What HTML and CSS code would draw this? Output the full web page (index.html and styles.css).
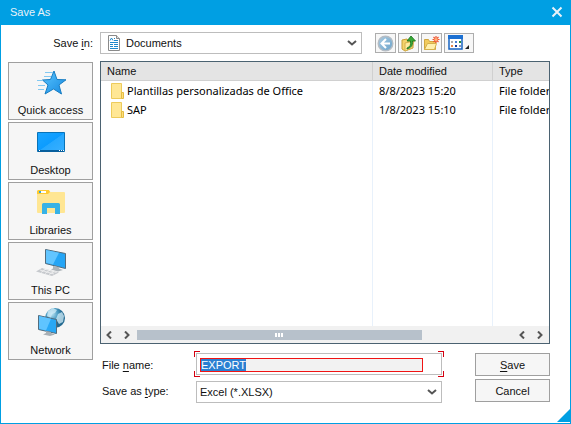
FILE: index.html
```html
<!DOCTYPE html>
<html lang="en">
<head>
<meta charset="utf-8">
<title>Save As</title>
<link rel="stylesheet" href="styles.css">
</head>
<body>
<form class="dialog">
  <header class="titlebar">
    <h1>Save As</h1>
    <button type="button" class="close" aria-label="Close">
      <svg width="12" height="12" viewBox="0 0 12 12"><path d="M1.5 1.5l9 9M10.5 1.5l-9 9" stroke="#e9f2f8" stroke-width="2"/></svg>
    </button>
  </header>

  <div class="content">
    <label class="look-label" for="look-in">Save <u>i</u>n:</label>
    <div class="look-row">
      <div class="combo combo-icon">
        <svg class="doc" width="12" height="16" viewBox="0 0 12 16">
          <path d="M.5.5h8l3 3v12H.5z" fill="#fff" stroke="#8a8a8a"/><path d="M8.500 .5v3h3" fill="#ddd" stroke="#8a8a8a"/>
          <path d="M2 5.500l1.500-2.500L5 5.500M6 3.500h1M6 5.500h4M2 7.500h8M2 9.500h3M6 9.500h4M2 11.500h3M6 11.500h4M2 13.500h8" fill="none" stroke="#1e88cb"/>
        </svg>
        <select id="look-in"><option>Documents</option></select>
        <svg class="chevron" width="10" height="6" viewBox="0 0 10 6"><path d="M1 1l4 3.500L9 1" fill="none" stroke="#555" stroke-width="2"/></svg>
      </div>
      <div class="tools">
        <button type="button" class="tool" aria-label="Back">
          <svg width="17" height="17" viewBox="0 0 17 17"><defs><linearGradient id="bk" x2="1" y2="1"><stop stop-color="#a9cbe2"/><stop offset="1" stop-color="#6ba3ca"/></linearGradient></defs><circle cx="8.500" cy="8.500" r="7.300" fill="url(#bk)" stroke="#b4bcc4" stroke-width="1.400"/><path d="M9 4L4.500 8.500 9 13M5 8.500h8" fill="none" stroke="#fff" stroke-width="2"/></svg>
        </button>
        <button type="button" class="tool" aria-label="Up one level">
          <svg width="17" height="17" viewBox="0 0 17 17"><path d="M2 5l5-1 1 2 5-1v8l-8 3-3-2z" fill="#f4d36c" stroke="#c79f35"/><path d="M5 8l9-2-2 7-7 3z" fill="#ffeb9f" stroke="#d5b04c"/><path d="M7 13c3-1 4-3 3.500-7H7L11 1l4.500 5h-3c.5 5-2 7-5.500 8z" fill="#39aa38" stroke="#16701b" stroke-width=".8"/></svg>
        </button>
        <button type="button" class="tool" aria-label="Create new folder">
          <svg width="17" height="17" viewBox="0 0 17 17"><path d="M1.500 4.500h4l1 2h6v8h-11z" fill="#f2cb5d" stroke="#cfa640"/><path d="M1.500 14.500l3-6h9l-2 6z" fill="#fff0ad" stroke="#d5b04c"/><path d="M13 1v7M9.500 4.500h7M10.500 2l5 5M15.500 2l-5 5" stroke="#ef5430" stroke-width="1.200"/><circle cx="13" cy="4.500" r="1.600" fill="#ffb27a"/></svg>
        </button>
        <button type="button" class="tool tool-wide" aria-label="View menu">
          <svg width="22" height="16" viewBox="0 0 22 16"><path d="M1 1h13v13H1z" fill="#fff" stroke="#1764c2" stroke-width="1.500"/><path d="M0 0h15v4H0z" fill="#1c70d2"/><path d="M3 6h2v2H3z" fill="#aaa"/><path d="M7 6h2v2H7z" fill="#4b80d3"/><path d="M11 6h2v2h-2z" fill="#208a3c"/><path d="M3 10h2v2H3z" fill="#e88848"/><path d="M7 10h2v2H7z" fill="#153d9a"/><path d="M11 10h2v2h-2z" fill="#8291b8"/><path d="M21 10v4h-4z" fill="#222"/></svg>
        </button>
      </div>
    </div>

    <nav class="places" aria-label="Places">
      <button type="button" class="place">
        <svg width="32" height="32" viewBox="0 0 32 32"><defs><linearGradient id="st" x2="1" y2="1"><stop stop-color="#5cc6ff"/><stop offset="1" stop-color="#1488e0"/></linearGradient></defs><path d="M19 5l3 8.500 9 .3-7 5.200 2.500 9-8-5-8.500 5 3-9-5.500-5 8-.5z" fill="url(#st)" stroke="#187dc2"/><path d="M10 6.500h8M9 10.500h7M2 14.500h6M3 19.500h7M3 23.500h6" stroke="#82c8f1"/></svg>
        <span>Quick access</span>
      </button>
      <button type="button" class="place">
        <svg width="32" height="32" viewBox="0 0 32 32"><defs><linearGradient id="dk" x2="1" y2="1"><stop stop-color="#1aa5ff"/><stop offset=".5" stop-color="#0c9cff"/><stop offset=".52" stop-color="#26a8ff"/><stop offset="1" stop-color="#39b0ff"/></linearGradient></defs><path d="M2.500 6.500h27v19h-27z" fill="url(#dk)" stroke="#0873b8"/><path d="M3 24h26v2H3z" fill="#075f9d"/><path d="M4 24.500h1M24 24.500h1M26 24.500h1M28 24.500h1" stroke="#fff"/></svg>
        <span>Desktop</span>
      </button>
      <button type="button" class="place">
        <svg width="32" height="32" viewBox="0 0 32 32"><path d="M2 5h12l1.500 1H29q1 0 1 1v19q0 1-1 1H3q-1 0-1-1z" fill="#ffe693"/><path d="M3 4h11l1 2-2 2H2V5z" fill="#ffca32"/><path d="M4 5h7v2H4z" fill="#fff"/><path d="M4 5h2v2H4z" fill="#36a8d6"/><path d="M7 28V18.500Q7 17 8.500 17h15q1.500 0 1.500 1.500V28h-5v-6h-8v6z" fill="#37b2e6"/></svg>
        <span>Libraries</span>
      </button>
      <button type="button" class="place">
        <svg width="32" height="32" viewBox="0 0 32 32"><path d="M10.500 3.500l20 4v15l-20-5z" fill="#25a5f5" stroke="#526c7d"/><path d="M11 4l13 2.800-6 11.700-7-1.800z" fill="#62c5ff"/><path d="M18 20v2.500l-2 1 7 2 5-1.500-4-1.500V21z" fill="#aeb5ba"/><path d="M7 22l17 4.500L17 30 1 25.500z" fill="#c6c9cd"/><path d="M5 24l14 4M8.500 22.800l13 3.700M11 23l-5 3.500M15 24l-5 3.500M19 25.500l-5 3" stroke="#f4f4f4" stroke-width=".8"/></svg>
        <span>This PC</span>
      </button>
      <button type="button" class="place">
        <svg width="32" height="32" viewBox="0 0 32 32"><defs><radialGradient id="gl" cx=".35" cy=".3"><stop stop-color="#b9e3f3"/><stop offset=".6" stop-color="#4a9bc2"/><stop offset="1" stop-color="#246a91"/></radialGradient></defs><circle cx="20" cy="12" r="10" fill="url(#gl)"/><path d="M13 5l5-3 4 2-2 3-3 1-1 4-4-2zM23 8l4-2 2 4-1 6-4 2-3-5zM18 15l4 2-2 4-3-2z" fill="#d3eef8" opacity=".75"/><path d="M3.500 9.500l18 4v14l-18-4z" fill="#28a8f6" stroke="#526c7d"/><path d="M4 10l12 2.800-5 11.700-7-1.800z" fill="#5fc4ff"/><path d="M11 25v2l-3 1.500 7 1.500 5-1.500-4-1.500v-1z" fill="#a8afb4"/></svg>
        <span>Network</span>
      </button>
    </nav>

    <section class="list">
      <table>
        <colgroup><col><col class="col-date"><col class="col-type"></colgroup>
        <thead><tr><th>Name</th><th>Date modified</th><th>Type</th></tr></thead>
        <tbody>
          <tr><td><div class="entry"><svg width="13" height="16" viewBox="0 0 13 16"><path d="M.5.500h10v15H.5z" fill="#ffe795" stroke="#edcb5b"/><path d="M10.500 9.500h2v6h-2z" fill="#ffe07a" stroke="#e4bd45"/></svg>Plantillas personalizadas de Office</div></td><td>8/8/2023 15:20</td><td>File folder</td></tr>
          <tr><td><div class="entry"><svg width="13" height="16" viewBox="0 0 13 16"><path d="M.5.500h10v15H.5z" fill="#ffe795" stroke="#edcb5b"/><path d="M10.500 9.500h2v6h-2z" fill="#ffe07a" stroke="#e4bd45"/></svg>SAP</div></td><td>1/8/2023 15:10</td><td>File folder</td></tr>
          <tr class="rest"><td></td><td></td><td></td></tr>
        </tbody>
      </table>
      <div class="scrollbar">
        <svg width="6" height="8" viewBox="0 0 6 8"><path d="M5 .5L1.500 4 5 7.500" fill="none" stroke="#555" stroke-width="2"/></svg>
        <svg width="6" height="8" viewBox="0 0 6 8"><path d="M1 .5L4.500 4 1 7.500" fill="none" stroke="#555" stroke-width="2"/></svg>
        <div class="track"><div class="thumb"><i></i><i></i><i></i></div></div>
        <svg width="6" height="8" viewBox="0 0 6 8"><path d="M5 .5L1.500 4 5 7.500" fill="none" stroke="#555" stroke-width="2"/></svg>
        <svg width="6" height="8" viewBox="0 0 6 8"><path d="M1 .5L4.500 4 1 7.500" fill="none" stroke="#555" stroke-width="2"/></svg>
      </div>
    </section>

    <div class="fields">
      <div class="labels">
        <label for="file-name">File <u>n</u>ame:</label>
        <label for="file-type">Save as <u>t</u>ype:</label>
      </div>
      <div class="inputs">
        <div class="name-box"><input id="file-name" type="text" value="EXPORT" autocomplete="off" spellcheck="false"></div>
        <div class="combo">
          <select id="file-type"><option>Excel (*.XLSX)</option></select>
          <svg class="chevron" width="10" height="6" viewBox="0 0 10 6"><path d="M1 1l4 3.500L9 1" fill="none" stroke="#555" stroke-width="2"/></svg>
        </div>
      </div>
      <div class="actions">
        <button type="submit" class="action"><u>S</u>ave</button>
        <button type="button" class="action">Cancel</button>
      </div>
    </div>
  </div>
  <div class="grip"></div>
</form>
<script src="dialog.js"></script>
</body>
</html>
```
FILE: styles.css
```css
* { box-sizing: border-box; }

body {
  margin: 0;
  background: #fff;
  color: #111;
  font: 11px/16px "Liberation Sans", Arial, sans-serif;
}

button, input, select { font: inherit; color: inherit; border-radius: 0; margin: 0; }
svg { display: block; flex: none; }
u { text-underline-offset: 2px; }

.dialog {
  position: relative;
  min-height: 100vh;
  border: 1px solid #009fe3;
  border-top: 0;
}

.titlebar {
  display: flex;
  align-items: center;
  justify-content: space-between;
  height: 25px;
  padding: 0 6px 2px 9px;
  background: #009fe3;
  color: #e9f2f8;
}
.titlebar h1 { margin: 0; font-size: 11px; font-weight: 400; }
.close { padding: 1px; border: 0; background: none; }

.content {
  display: grid;
  grid-template-columns: 85px minmax(0, 1fr);
  grid-template-rows: auto auto 1fr;
  column-gap: 7px;
  row-gap: 7px;
  padding: 7px 20px 20px 7px;
}

.look-label { align-self: center; text-align: right; }
.look-row { display: flex; align-items: center; gap: 13px; padding-right: 76px; }

.combo {
  position: relative;
  flex: 1;
  height: 22px;
}
.combo select {
  display: block;
  width: 100%;
  height: 100%;
  padding: 0 24px 0 3px;
  border: 1px solid #bdbdbd;
  background: #fff;
  appearance: none;
  outline: none;
}
.combo-icon select { padding-left: 25px; }
.chevron { position: absolute; right: 5px; top: 8px; pointer-events: none; }
.doc { position: absolute; left: 8px; top: 3px; pointer-events: none; }

.tools { display: flex; gap: 2px; }
.tool {
  display: grid;
  place-items: center;
  width: 21px;
  height: 20px;
  padding: 0;
  border: 1px solid #adadad;
  background: #f7f7f7;
}
.tool-wide { width: 30px; }

.places {
  grid-row: 2 / span 2;
  display: flex;
  flex-direction: column;
  gap: 2px;
  padding-top: 1px;
}
.place {
  display: flex;
  flex-direction: column;
  align-items: center;
  gap: 4px;
  height: 58px;
  padding: 3px 0 0;
  border: 1px solid #9f9f9f;
  background: #f6f6f6;
}

.list {
  display: flex;
  flex-direction: column;
  height: 283px;
  border: 1px solid #4b6271;
}
table {
  flex: 1;
  width: 100%;
  border-collapse: separate;
  border-spacing: 0;
  table-layout: fixed;
}
.col-date { width: 120px; }
.col-type { width: 57px; }
th, td {
  height: 19px;
  padding: 0 0 0 6px;
  overflow: hidden;
  white-space: nowrap;
  text-align: left;
  font-weight: 400;
}
th { background: #e4e4e4; border-bottom: 1px solid #d0d0d0; }
th + th { border-left: 1px solid #d0d0d0; }
td { font-family: "Noto Sans", "Segoe UI", sans-serif; color: #000; }
td + td { border-left: 1px solid #e8f1fb; }
td:first-child { padding-left: 10px; }
.rest td { height: auto; }
.entry { display: flex; align-items: center; gap: 3px; }

.scrollbar {
  display: flex;
  align-items: center;
  gap: 12px;
  height: 17px;
  padding: 0 6px 0 5px;
  background: #f1f1f1;
}
.track { flex: 1; margin-left: -5px; }
.thumb {
  display: flex;
  align-items: center;
  justify-content: center;
  gap: 1px;
  width: 77%;
  height: 10px;
  background: #b7c1cb;
}
.thumb i { width: 2px; height: 4px; background: #fff; }

.fields { grid-column: 2; display: flex; align-items: flex-start; padding-top: 2px; }
.labels { width: 96px; padding: 4px 0 0 2px; display: flex; flex-direction: column; gap: 10px; }
.inputs { flex: 1; display: flex; flex-direction: column; gap: 6px; }
.inputs .combo { flex: none; }
.name-box {
  position: relative;
  height: 22px;
  padding: 4px 18px 4px 3px;
  border: 1px solid #bdbdbd;
}
.name-box::before {
  content: "";
  position: absolute;
  inset: -3px;
  pointer-events: none;
  background:
    linear-gradient(#d4000f, #d4000f) 0 0 / 6px 1px,
    linear-gradient(#d4000f, #d4000f) 0 0 / 1px 6px,
    linear-gradient(#d4000f, #d4000f) 100% 0 / 6px 1px,
    linear-gradient(#d4000f, #d4000f) 100% 0 / 1px 6px,
    linear-gradient(#d4000f, #d4000f) 0 100% / 6px 1px,
    linear-gradient(#d4000f, #d4000f) 0 100% / 1px 6px,
    linear-gradient(#d4000f, #d4000f) 100% 100% / 6px 1px,
    linear-gradient(#d4000f, #d4000f) 100% 100% / 1px 6px;
  background-repeat: no-repeat;
}
.name-box input {
  display: block;
  width: 100%;
  height: 14px;
  padding: 0;
  border: 1px solid #f01414;
  background: #f2f2f2;
  outline: none;
  line-height: 12px;
}
.name-box input::selection { background: #2a80d2; color: #fff; }

.actions { display: flex; flex-direction: column; gap: 3px; width: 75px; margin-left: 33px; }
.action { height: 23px; padding: 0; border: 1px solid #9f9f9f; background: #f6f6f6; }

.grip {
  position: absolute;
  right: 0;
  bottom: 1px;
  border-left: 13px solid transparent;
  border-bottom: 13px solid #009fe3;
}
```
FILE: dialog.js
```js
const fileName = document.getElementById("file-name");
fileName.focus();
fileName.select();
```
